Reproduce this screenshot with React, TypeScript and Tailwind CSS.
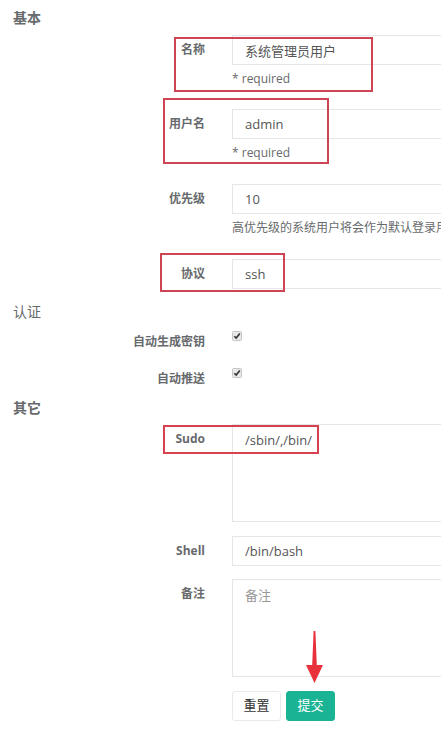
import React from "react";

const FONT = { fontFamily: '"Open Sans", "Noto Sans CJK SC", sans-serif' };

function Label({ children }: { children: React.ReactNode }) {
  return (
    <label className="w-[205px] shrink-0 text-right pt-[7px] text-[12px] leading-[16px] font-bold text-[#676a6c]">
      {children}
    </label>
  );
}

function Field({
  label,
  value,
  help,
  className,
}: {
  label: string;
  value: string;
  help?: string;
  className?: string;
}) {
  return (
    <div className={`flex ${className ?? ""}`}>
      <Label>{label}</Label>
      <div className="ml-[27px] w-[420px] shrink-0">
        <input
          type="text"
          defaultValue={value}
          className="block h-[30px] w-full border border-[#e5e6e7] bg-white px-[12px] text-[13px] text-[#555] outline-none"
        />
        {help && <p className="mt-[5px] text-[12px] leading-[17px] text-[#676a6c] whitespace-nowrap">{help}</p>}
      </div>
    </div>
  );
}

function Area({ label, value, placeholder, className }: { label: string; value?: string; placeholder?: string; className?: string }) {
  return (
    <div className={`flex ${className ?? ""}`}>
      <Label>{label}</Label>
      <textarea
        defaultValue={value}
        placeholder={placeholder}
        className="ml-[27px] block h-[98px] w-[420px] shrink-0 resize-none border border-[#e5e6e7] bg-white px-[12px] py-[6px] text-[13px] leading-[18px] text-[#555] placeholder:text-[#999] outline-none"
      />
    </div>
  );
}

function Check({ label, className }: { label: string; className?: string }) {
  return (
    <div className={`flex ${className ?? ""}`}>
      <span className="w-[205px] shrink-0 text-right mt-[1px] text-[12px] leading-[20px] font-bold text-[#676a6c]">{label}</span>
      <svg width="10" height="10" viewBox="0 0 10 10" className="ml-[27px] shrink-0">
        <rect x="0.5" y="0.5" width="9" height="9" rx="1" fill="#e9e9e9" stroke="#c6c6c6" />
        <path d="M2.3 5.2 L4.2 7.1 L7.8 2.6" fill="none" stroke="#333" strokeWidth="1.6" />
      </svg>
    </div>
  );
}

function Heading({ children, bold = true, className }: { children: React.ReactNode; bold?: boolean; className?: string }) {
  return (
    <h3 className={`pl-[13px] text-[14px] leading-[20px] text-[#676a6c] ${bold ? "font-bold" : "font-normal"} ${className ?? ""}`}>
      {children}
    </h3>
  );
}

export default function App() {
  return (
    <div className="relative w-full min-h-screen overflow-hidden bg-white" style={FONT}>
      <div className="pt-[8px] pb-[11px]">
        <Heading>基本</Heading>
        <Field className="mt-[7px]" label="名称" value="系统管理员用户" help="* required" />
        <Field className="mt-[22px]" label="用户名" value="admin" help="* required" />
        <Field className="mt-[23px]" label="优先级" value="10" help="高优先级的系统用户将会作为默认登录用户" />
        <Field className="mt-[23px]" label="协议" value="ssh" />

        <Heading bold={false} className="mt-[13px]">认证</Heading>
        <Check className="mt-[9px]" label="自动生成密钥" />
        <Check className="mt-[16px]" label="自动推送" />

        <Heading className="mt-[9px]">其它</Heading>
        <Area className="mt-[6px]" label="Sudo" value="/sbin/,/bin/" />
        <Field className="mt-[14px]" label="Shell" value="/bin/bash" />
        <Area className="mt-[13px]" label="备注" placeholder="备注" />

        <div className="mt-[14px] ml-[232px] flex gap-[5px]">
          <button className="h-[30px] w-[49px] rounded-[3px] border border-[#e7eaec] bg-white text-[13px] font-normal text-[#333]">重置</button>
          <button className="h-[30px] w-[49px] rounded-[3px] border border-[#1ab394] bg-[#1ab394] text-[13px] font-normal text-white">提交</button>
        </div>
      </div>

      {/* annotation boxes */}
      <div className="absolute left-[174px] top-[37px] h-[55px] w-[199px] border-2 border-[#cd4452]" />
      <div className="absolute left-[163px] top-[98px] h-[66px] w-[166px] border-2 border-[#cd4452]" />
      <div className="absolute left-[160px] top-[253px] h-[39px] w-[125px] border-2 border-[#cd4452]" />
      <div className="absolute left-[163px] top-[425px] h-[29px] w-[156px] border-2 border-[#d8414f]" />

      <svg className="absolute left-[305px] top-[630px]" width="20" height="55" viewBox="0 0 20 55">
        <polygon points="8.6,1 10.4,1 11.8,35 18,35 9.5,53 1,35 7.2,35" fill="#e8313a" />
      </svg>
    </div>
  );
}
